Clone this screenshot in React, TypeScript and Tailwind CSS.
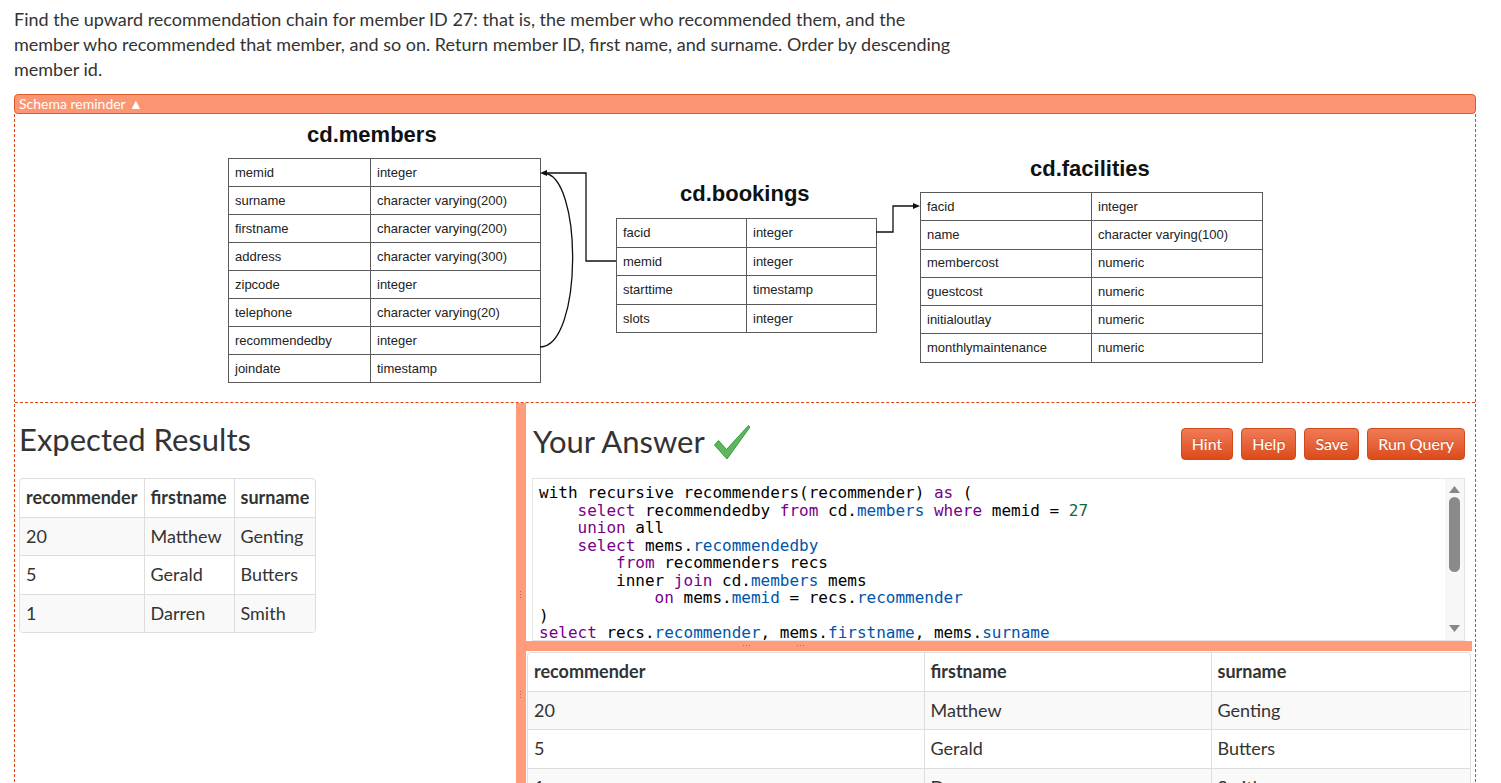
import React from 'react';

const K = 'text-[#770088]';
const V = 'text-[#0055aa]';
const N = 'text-[#116644]';

type Tok = [string, string];

const code: Tok[][] = [
  [['with recursive recommenders(recommender) ', ''], ['as', K], [' (', '']],
  [['    ', ''], ['select', K], [' recommendedby ', ''], ['from', K], [' cd.', ''], ['members', V], [' ', ''], ['where', K], [' memid = ', ''], ['27', N]],
  [['    ', ''], ['union', K], [' all', '']],
  [['    ', ''], ['select', K], [' mems.', ''], ['recommendedby', V]],
  [['        ', ''], ['from', K], [' recommenders recs', '']],
  [['        inner ', ''], ['join', K], [' cd.', ''], ['members', V], [' mems', '']],
  [['            ', ''], ['on', K], [' mems.', ''], ['memid', V], [' = recs.', ''], ['recommender', V]],
  [[')', '']],
  [['select', K], [' recs.', ''], ['recommender', V], [', mems.', ''], ['firstname', V], [', mems.', ''], ['surname', V]],
  [['    ', ''], ['from', K], [' recommenders recs', '']],
  [['    inner ', ''], ['join', K], [' cd.', ''], ['members', V], [' mems', '']],
  [['        ', ''], ['on', K], [' recs.', ''], ['recommender', V], [' = mems.', ''], ['memid', V]],
  [['order', K], [' ', ''], ['by', K], [' memid ', ''], ['desc', K]],
];

const members: [string, string][] = [
  ['memid', 'integer'],
  ['surname', 'character varying(200)'],
  ['firstname', 'character varying(200)'],
  ['address', 'character varying(300)'],
  ['zipcode', 'integer'],
  ['telephone', 'character varying(20)'],
  ['recommendedby', 'integer'],
  ['joindate', 'timestamp'],
];

const bookings: [string, string][] = [
  ['facid', 'integer'],
  ['memid', 'integer'],
  ['starttime', 'timestamp'],
  ['slots', 'integer'],
];

const facilities: [string, string][] = [
  ['facid', 'integer'],
  ['name', 'character varying(100)'],
  ['membercost', 'numeric'],
  ['guestcost', 'numeric'],
  ['initialoutlay', 'numeric'],
  ['monthlymaintenance', 'numeric'],
];

const results = [
  ['20', 'Matthew', 'Genting'],
  ['5', 'Gerald', 'Butters'],
  ['1', 'Darren', 'Smith'],
];

function SchemaTable({ rows, col, cls, rowH }: { rows: [string, string][]; col: string; cls: string; rowH: string }) {
  return (
    <div className={`absolute border-t border-x border-[#5a5a5a] bg-white text-[13px] text-[#222] ${cls}`}>
      {rows.map(([a, b]) => (
        <div key={a} className={`flex border-b border-[#5a5a5a] ${rowH}`}>
          <div className={`${col} border-r border-[#5a5a5a] pl-[6px] flex items-center`}>{a}</div>
          <div className="flex-1 pl-[6px] flex items-center">{b}</div>
        </div>
      ))}
    </div>
  );
}

function Btn({ children }: { children: React.ReactNode }) {
  return (
    <button className="h-[32px] px-[10px] rounded-[4px] border border-[#cf4a1c] bg-gradient-to-b from-[#f07a55] to-[#dc4a16] text-white text-[16px] leading-none [text-shadow:0_-1px_0_rgba(0,0,0,0.2)]">
      {children}
    </button>
  );
}

function Dots({ vertical }: { vertical?: boolean }) {
  return (
    <div className={`flex gap-[2px] ${vertical ? 'flex-col' : ''}`}>
      <span className="w-[1px] h-[1px] bg-[#b46a4c]" />
      <span className="w-[1px] h-[1px] bg-[#b46a4c]" />
      <span className="w-[1px] h-[1px] bg-[#b46a4c]" />
    </div>
  );
}

export default function App() {
  return (
    <div className="min-h-screen bg-white text-[#333] font-['Lato','Noto_Sans',sans-serif]">
      {/* Question */}
      <p className="px-[14px] pt-[7px] text-[18px] leading-[25px]">
        Find the upward recommendation chain for member ID 27: that is, the member who recommended them, and the
        <br />
        member who recommended that member, and so on. Return member ID, first name, and surname. Order by descending
        <br />
        member id.
      </p>

      <div className="ml-[14px] w-[1462px] mt-[12px]">
        {/* Schema reminder bar */}
        <div className="h-[20px] rounded-[4px] bg-[#fc9571] border border-[#dc5a2c] text-white text-[14px] leading-[18px] pl-[4px]">
          Schema reminder ▲
        </div>

        <div className="border-x border-dashed border-[#dd4814]">
          {/* Schema diagram */}
          <div className="relative h-[289px] border-b border-dashed border-[#dd4814] font-['Liberation_Sans',Arial,sans-serif]">
            <div className="absolute left-[292px] top-[10px] text-[22px] leading-[22px] font-bold text-[#111]">cd.members</div>
            <div className="absolute left-[665px] top-[69px] text-[22px] leading-[22px] font-bold text-[#111]">cd.bookings</div>
            <div className="absolute left-[1015px] top-[44px] text-[22px] leading-[22px] font-bold text-[#111]">cd.facilities</div>

            <SchemaTable rows={members} col="w-[142px]" cls="left-[213px] top-[44px] w-[313px]" rowH="h-[28px]" />
            <SchemaTable rows={bookings} col="w-[130px]" cls="left-[601px] top-[104px] w-[261px]" rowH="h-[28.5px]" />
            <SchemaTable rows={facilities} col="w-[171px]" cls="left-[905px] top-[78px] w-[343px]" rowH="h-[28.3px]" />

            <svg className="absolute inset-0" width="1460" height="289" fill="none">
              <path d="M601 147 H571 V59 H531" stroke="#111" strokeWidth="1.3" />
              <path d="M525 59 L532 56 L532 62 Z" fill="#111" />
              <path d="M861 118 H878 V92 H898" stroke="#111" strokeWidth="1.3" />
              <path d="M905 92 L898 89 L898 95 Z" fill="#111" />
              <path d="M525 233 C568 233 568 59 528 59" stroke="#111" strokeWidth="1.3" />
            </svg>
          </div>

          {/* Bottom panels */}
          <div className="flex min-h-[400px]">
            {/* Expected */}
            <div className="w-[501px] pl-[4px]">
              <h2 className="mt-[20px] text-[31px] leading-[33px] font-normal">Expected Results</h2>
              <div className="mt-[22px] w-[297px] border border-[#ddd] rounded-[4px] overflow-hidden text-[18px] leading-[21.5px]">
                <table className="w-full table-fixed border-collapse">
                  <thead>
                    <tr>
                      <th className="w-[124px] text-left font-bold px-[6px] py-[8px]">recommender</th>
                      <th className="w-[90px] text-left font-bold px-[6px] py-[8px] border-l border-[#ddd]">firstname</th>
                      <th className="text-left font-bold px-[6px] py-[8px] border-l border-[#ddd]">surname</th>
                    </tr>
                  </thead>
                  <tbody>
                    {results.map((r, i) => (
                      <tr key={r[0]} className={i % 2 === 0 ? 'bg-[#f9f9f9]' : 'bg-white'}>
                        <td className="px-[6px] py-[8px] border-t border-[#ddd]">{r[0]}</td>
                        <td className="px-[6px] py-[8px] border-t border-l border-[#ddd]">{r[1]}</td>
                        <td className="px-[6px] py-[8px] border-t border-l border-[#ddd]">{r[2]}</td>
                      </tr>
                    ))}
                  </tbody>
                </table>
              </div>
            </div>

            {/* Vertical splitter */}
            <div className="relative w-[10px] bg-[#ff9c79]">
              <div className="absolute left-[4px] top-[188px]"><Dots vertical /></div>
              <div className="absolute left-[4px] top-[288px]"><Dots vertical /></div>
            </div>

            {/* Your answer */}
            <div className="flex-1 flex flex-col">
              <div className="mt-[20px] flex items-start justify-between pl-[7px] pr-[10px]">
                <div className="flex items-center gap-[8px]">
                  <h2 className="text-[31px] leading-[33px] font-normal">Your Answer</h2>
                  <svg width="38" height="36" viewBox="0 0 38 36" className="mt-[1px]">
                    <path d="M1.5 21 L5.5 16.5 L13.5 25.5 L35.5 1.5 L37 3 L14 35 Z" fill="#5cb85c" stroke="#3f953f" strokeWidth="1" strokeLinejoin="round" />
                  </svg>
                </div>
                <div className="mt-[5px] flex gap-[8px]">
                  <Btn>Hint</Btn>
                  <Btn>Help</Btn>
                  <Btn>Save</Btn>
                  <Btn>Run Query</Btn>
                </div>
              </div>

              {/* Editor */}
              <div className="mt-[18px] ml-[6px] mr-[10px] h-[163px] border border-[#e3e3e3] flex overflow-hidden">
                <div className="flex-1 overflow-hidden pl-[6px] pt-[5px] font-['DejaVu_Sans_Mono',monospace] text-[16px] leading-[17.5px] text-black whitespace-pre">
                  {code.map((line, i) => (
                    <div key={i}>
                      {line.map(([t, c], j) => (
                        <span key={j} className={c}>{t}</span>
                      ))}
                    </div>
                  ))}
                </div>
                <div className="w-[19px] bg-[#f7f7f7] flex flex-col items-center pt-[7px] pb-[8px]">
                  <svg width="11" height="7" viewBox="0 0 11 7"><path d="M5.5 0 L11 7 H0 Z" fill="#888" /></svg>
                  <div className="mt-[4px] w-[11px] h-[75px] rounded-full bg-[#8a8a8a]" />
                  <div className="flex-1" />
                  <svg width="11" height="7" viewBox="0 0 11 7"><path d="M0 0 H11 L5.5 7 Z" fill="#888" /></svg>
                </div>
              </div>

              {/* Horizontal splitter */}
              <div className="relative h-[10px] mr-[3px] bg-[#ff9c79]">
                <div className="absolute left-[217px] top-[4px]"><Dots /></div>
                <div className="absolute left-[271px] top-[4px]"><Dots /></div>
              </div>

              {/* Result table */}
              <div className="ml-[1px] mr-[4px] mt-[1px] border border-[#ddd] rounded-[4px] overflow-hidden text-[18px] leading-[21.5px]">
                <table className="w-full table-fixed border-collapse">
                  <thead>
                    <tr>
                      <th className="w-[396px] text-left font-bold px-[6px] py-[8px]">recommender</th>
                      <th className="w-[287px] text-left font-bold px-[6px] py-[8px] border-l border-[#ddd]">firstname</th>
                      <th className="text-left font-bold px-[6px] py-[8px] border-l border-[#ddd]">surname</th>
                    </tr>
                  </thead>
                  <tbody>
                    {results.map((r, i) => (
                      <tr key={r[0]} className={i % 2 === 0 ? 'bg-[#f9f9f9]' : 'bg-white'}>
                        <td className="px-[6px] py-[8px] border-t border-[#ddd]">{r[0]}</td>
                        <td className="px-[6px] py-[8px] border-t border-l border-[#ddd]">{r[1]}</td>
                        <td className="px-[6px] py-[8px] border-t border-l border-[#ddd]">{r[2]}</td>
                      </tr>
                    ))}
                  </tbody>
                </table>
              </div>
            </div>
          </div>
        </div>
      </div>
    </div>
  );
}
